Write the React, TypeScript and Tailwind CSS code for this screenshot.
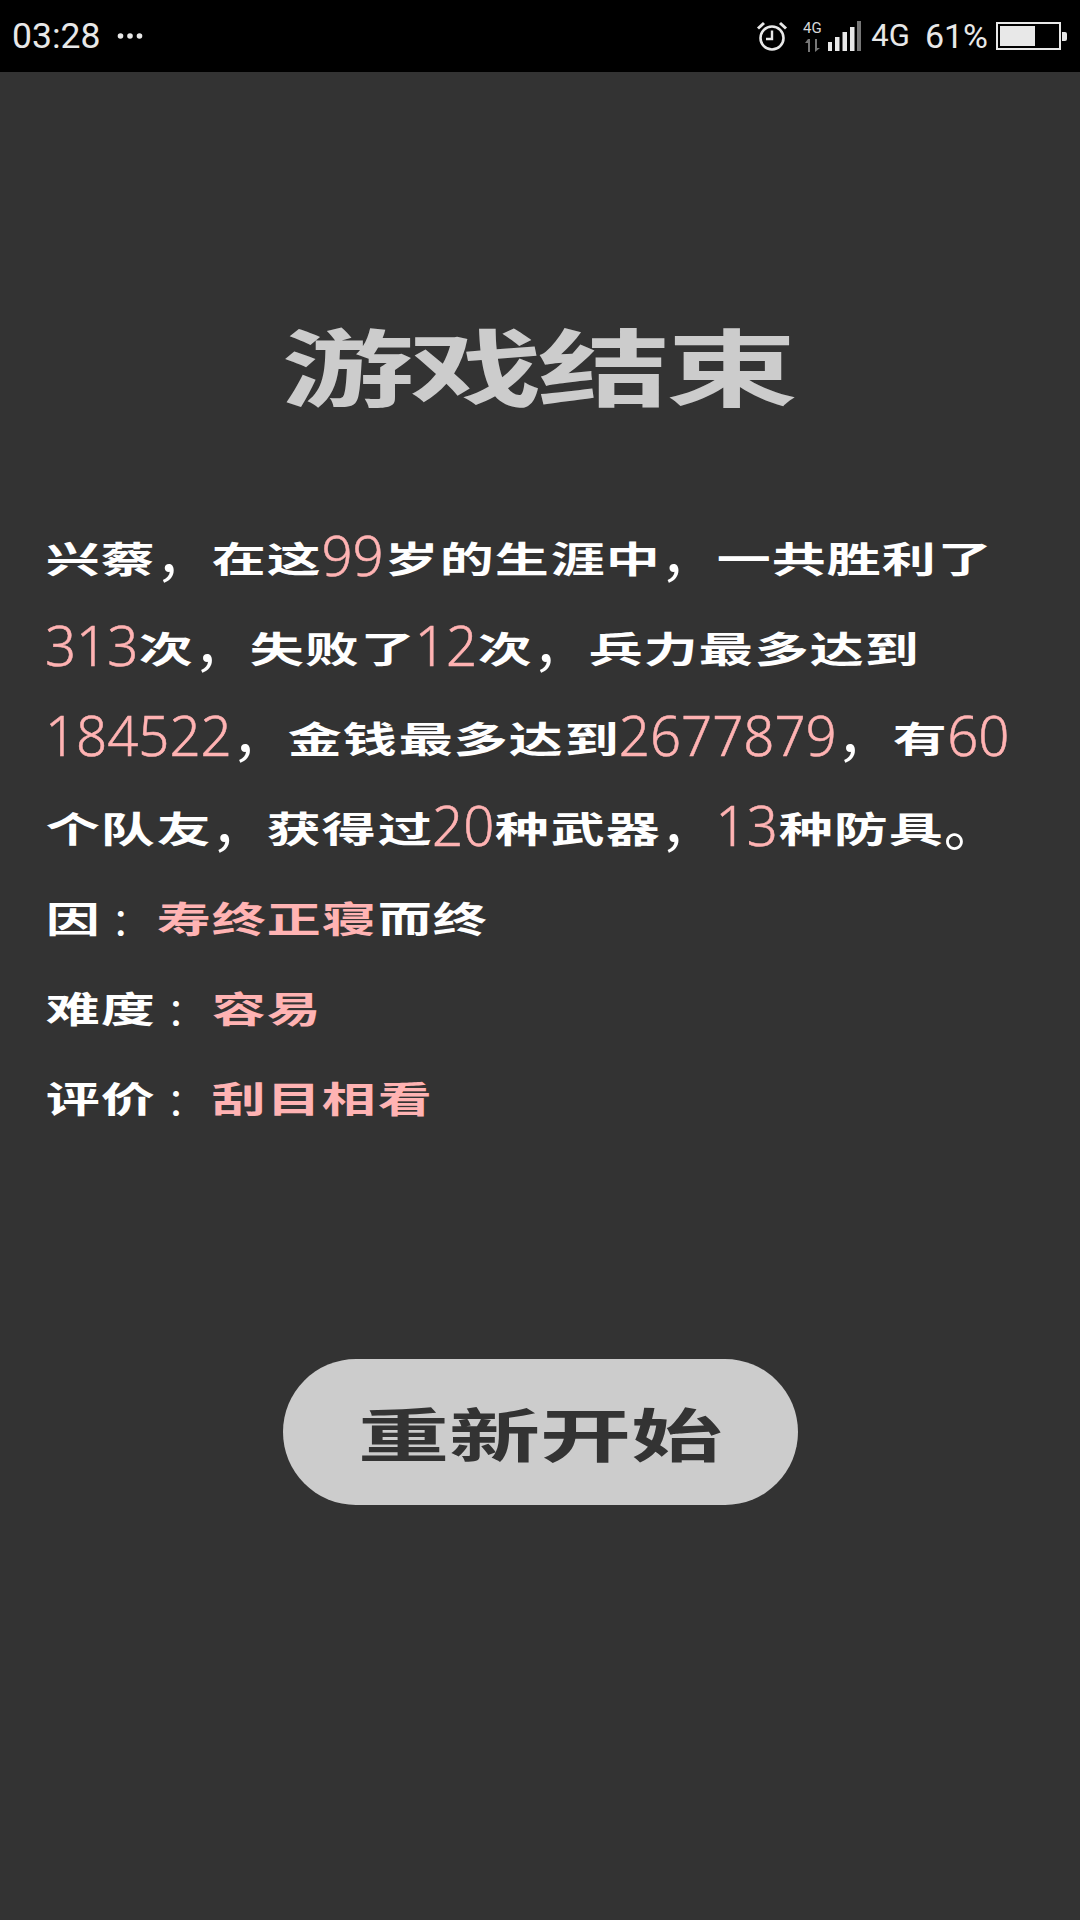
const CJK = `"Noto Sans CJK SC", sans-serif`;
const NUM = `"Noto Sans", "Noto Sans CJK SC", sans-serif`;

// the reference face is much wider than it is tall, so each glyph is stretched in its own cell
function Han({ children }: { children: string }) {
  return (
    <>
      {children.split("").map((c, i) => {
        if (c === "：") {
          return (
            <span key={i} className="inline-block w-[55.3px] pl-[11px] text-[38px] font-normal align-[1px]">
              {c}
            </span>
          );
        }
        if (c === "，" || c === "。") {
          return (
            <span key={i} className="inline-block w-[55.3px] text-[55px] font-normal">
              {c}
            </span>
          );
        }
        return (
          <span key={i} className="inline-block w-[55.3px] text-center text-[36px] scale-x-[1.5] align-[3px]">
            {c}
          </span>
        );
      })}
    </>
  );
}

function Num({ children }: { children: string }) {
  return (
    <span className="text-[54.5px] font-light text-[#ffb3b3] [-webkit-text-stroke:0.5px_#ffb3b3]">
      {children}
    </span>
  );
}

function Line({ children }: { children: React.ReactNode }) {
  return (
    <div className="h-[90px] text-[54.5px] leading-[90px] whitespace-nowrap" style={{ fontFamily: NUM }}>
      {children}
    </div>
  );
}

function StatusBar() {
  return (
    <div
      className="h-[72px] bg-black flex items-center justify-between pl-[12px] pr-[13px] text-[#e8e8e8]"
      style={{ fontFamily: "Roboto, sans-serif" }}
    >
      <div className="flex items-center gap-[17px]">
        <span className="text-[35.5px] leading-[72px]">03:28</span>
        <svg width="26" height="8" viewBox="0 0 26 8">
          <circle cx="3.5" cy="4" r="2.8" fill="#e8e8e8" />
          <circle cx="13" cy="4" r="2.8" fill="#e8e8e8" />
          <circle cx="22.5" cy="4" r="2.8" fill="#e8e8e8" />
        </svg>
      </div>
      <div className="flex items-center">
        {/* alarm */}
        <svg width="32" height="32" viewBox="0 0 32 32" fill="none" stroke="#e8e8e8" strokeWidth="2.6">
          <circle cx="16" cy="18" r="11.5" />
          <path d="M16 10.5V19H10" strokeWidth="2.4" />
          <path d="M2 8.5L8 3M30 8.5L24 3" strokeWidth="3" />
        </svg>
        {/* 4G + arrows */}
        <div className="ml-[15px] w-[18px] flex flex-col items-center">
          <span className="text-[15px] leading-[16px] text-[#d8d8d8]">4G</span>
          <svg className="mt-[3px]" width="15" height="13" viewBox="0 0 15 13" fill="#777">
            <path d="M3 0h2v13H3V4H0zM10 0h2v9h3l-5 4z" />
          </svg>
        </div>
        {/* signal bars */}
        <svg className="ml-[6px]" width="35" height="32" viewBox="0 0 35 32">
          <rect x="1" y="22" width="4" height="9" fill="#e8e8e8" />
          <rect x="8" y="17" width="4.5" height="14" fill="#e8e8e8" />
          <rect x="15.5" y="12" width="4.5" height="19" fill="#e8e8e8" />
          <rect x="23" y="7" width="4.5" height="24" fill="#e8e8e8" />
          <rect x="30" y="1" width="4" height="30" fill="#777" />
        </svg>
        <span className="ml-[9px] text-[31px] leading-[72px]">4G</span>
        <span className="ml-[15px] text-[34px] leading-[72px]">61%</span>
        <div className="ml-[8px] flex items-center">
          <div className="w-[65px] h-[28px] border-[2.5px] border-[#e8e8e8] p-[2px]">
            <div className="h-full w-[35px] bg-[#e8e8e8]" />
          </div>
          <div className="ml-[1px] w-[5px] h-[9px] bg-[#e8e8e8] rounded-r-[2px]" />
        </div>
      </div>
    </div>
  );
}

export default function App() {
  return (
    <div className="w-[1080px] h-[1920px] bg-[#333333] overflow-hidden" style={{ fontFamily: CJK }}>
      <StatusBar />

      <h1 className="mt-[237px] flex justify-center text-[#cccccc] text-[84px] leading-[110px] font-bold">
        {"游戏结束".split("").map((c) => (
          <span key={c} className="w-[128px] text-center scale-x-[1.58]">
            {c}
          </span>
        ))}
      </h1>

      <div className="mt-[91px] pl-[45px] text-white font-bold">
        <Line>
          <Han>兴蔡，在这</Han>
          <Num>99</Num>
          <Han>岁的生涯中，一共胜利了</Han>
        </Line>
        <Line>
          <Num>313</Num>
          <Han>次，失败了</Han>
          <Num>12</Num>
          <Han>次，兵力最多达到</Han>
        </Line>
        <Line>
          <Num>184522</Num>
          <Han>，金钱最多达到</Han>
          <Num>2677879</Num>
          <Han>，有</Han>
          <Num>60</Num>
        </Line>
        <Line>
          <Han>个队友，获得过</Han>
          <Num>20</Num>
          <Han>种武器，</Han>
          <Num>13</Num>
          <Han>种防具。</Han>
        </Line>
        <Line>
          <Han>因：</Han>
          <span className="text-[#ffb3b3]">
            <Han>寿终正寝</Han>
          </span>
          <Han>而终</Han>
        </Line>
        <Line>
          <Han>难度：</Han>
          <span className="text-[#ffb3b3]">
            <Han>容易</Han>
          </span>
        </Line>
        <Line>
          <Han>评价：</Han>
          <span className="text-[#ffb3b3]">
            <Han>刮目相看</Han>
          </span>
        </Line>
      </div>

      <div className="mt-[219px] flex justify-center">
        <button className="w-[515px] h-[146px] rounded-[73px] bg-[#cccccc] text-[#333333] text-[58px] font-bold flex items-center justify-center">
          {"重新开始".split("").map((c) => (
            <span key={c} className="w-[91px] text-center scale-x-[1.57]">
              {c}
            </span>
          ))}
        </button>
      </div>
    </div>
  );
}
